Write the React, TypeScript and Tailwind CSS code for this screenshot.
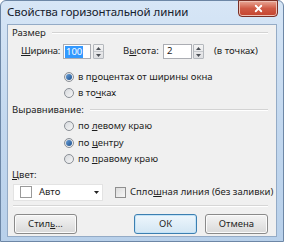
import { X } from 'lucide-react';

const Radio = ({ checked }: { checked?: boolean }) => (
  <span className="flex items-center justify-center w-[10px] h-[10px] rounded-full border border-[#8a8f96] bg-gradient-to-br from-[#d6d9dd] to-[#f6f6f6] shrink-0">
    {checked && (
      <span className="block w-[6px] h-[6px] rounded-full bg-gradient-to-br from-[#6aa0d8] to-[#1b4f8c]" />
    )}
  </span>
);

const Spinner = () => (
  <span className="flex flex-col w-[11px] h-[15px] border border-[#b4b8bd] bg-gradient-to-b from-[#f4f4f4] to-[#dedfe2] rounded-[1px]">
    <span className="flex-1 flex items-center justify-center border-b border-[#c6c9cd]">
      <svg width="5" height="3" viewBox="0 0 5 3">
        <path d="M0 3 L2.5 0 L5 3 Z" fill="#4d5157" />
      </svg>
    </span>
    <span className="flex-1 flex items-center justify-center">
      <svg width="5" height="3" viewBox="0 0 5 3">
        <path d="M0 0 L2.5 3 L5 0 Z" fill="#4d5157" />
      </svg>
    </span>
  </span>
);

const U = ({ children }: { children: string }) => <span className="underline underline-offset-1">{children}</span>;

const GroupHeader = ({ label }: { label: string }) => (
  <div className="flex items-center h-[16px] pl-[4px] pr-[8px] gap-[6px]">
    <span>{label}</span>
    <div className="flex-1 h-[2px] border-t border-[#d3d3d3] border-b border-b-white" />
  </div>
);

const RadioRow = ({ checked, children }: { checked?: boolean; children: React.ReactNode }) => (
  <div className="flex items-center h-[16px] pl-[56px] gap-[4px]">
    <Radio checked={checked} />
    <span>{children}</span>
  </div>
);

const Btn = ({ children, primary }: { children: React.ReactNode; primary?: boolean }) => (
  <button
    className={
      'w-[63px] h-[20px] rounded-[3px] border flex items-center justify-center text-[#1e1e1e] ' +
      (primary
        ? 'border-[#3c7fb1] bg-gradient-to-b from-[#eef6fc] to-[#d3e6f3] shadow-[inset_0_0_0_1px_#c3e3f7]'
        : 'border-[#8a8a8a] bg-gradient-to-b from-[#f4f4f4] to-[#d9d9d9] shadow-[inset_0_0_0_1px_#fbfbfb]')
    }
  >
    {children}
  </button>
);

const App = () => {
  return (
    <div className="w-[284px] h-[242px] overflow-hidden whitespace-nowrap font-['Noto_Sans','DejaVu_Sans',sans-serif] text-[9.5px] text-[#1e1e1e]">
      <div className="w-full h-full flex flex-col rounded-t-[6px] border border-[#6d87a6] bg-gradient-to-b from-[#d7e6f6] via-[#c3d8ef] to-[#b8d0ea]">
        <div className="flex items-start justify-between h-[23px] shrink-0">
          <span className="pl-[6px] pt-[5px] text-[11.5px] text-[#15202c] leading-none tracking-[-0.1px]">
            Свойства горизонтальной линии
          </span>
          <span className="mr-[5px] w-[40px] h-[17px] -mt-px flex items-center justify-center rounded-b-[4px] border border-[#7a2f25] bg-gradient-to-b from-[#e8a796] via-[#cf5a45] to-[#c4432d] shadow-[inset_0_0_0_1px_#eec0b4]">
            <X size={11} strokeWidth={4} color="#ffffff" />
          </span>
        </div>
        <div className="flex-1 mx-[6px] mb-[4px] border border-[#94abc6] bg-[#f0f0f0] flex flex-col">
          <GroupHeader label="Размер" />
          <div className="flex items-center h-[17px] mt-[2px] pl-[13px]">
            <span className="w-[42px] tracking-[-0.3px]">
              <U>Ш</U>ирина:
            </span>
            <span className="w-[28px] h-[15px] border border-[#abadb3] bg-white flex items-center pl-[1px]">
              <span className="bg-[#3399ff] text-white px-[1px] leading-[12px]">100</span>
            </span>
            <span className="ml-[2px]">
              <Spinner />
            </span>
            <span className="w-[40px] ml-[19px]">
              В<U>ы</U>сота:
            </span>
            <span className="w-[29px] h-[15px] border border-[#abadb3] bg-white flex items-center pl-[3px]">2</span>
            <span className="ml-[1px]">
              <Spinner />
            </span>
            <span className="ml-[10px]">(в точках)</span>
          </div>
          <div className="mt-[9px]" />
          <RadioRow checked>
            в п<U>р</U>оцентах от ширины окна
          </RadioRow>
          <RadioRow>
            в то<U>ч</U>ках
          </RadioRow>
          <div className="mt-[1px]" />
          <GroupHeader label="Выравнивание:" />
          <RadioRow>
            по <U>л</U>евому краю
          </RadioRow>
          <div className="mt-[1px]" />
          <RadioRow checked>
            по <U>ц</U>ентру
          </RadioRow>
          <RadioRow>
            по <U>п</U>равому краю
          </RadioRow>
          <div className="flex items-center h-[14px] pl-[4px] mt-[1px]">
            <span>
              <U>Ц</U>вет:
            </span>
          </div>
          <div className="flex items-center h-[18px] mt-[1px] pl-[5px]">
            <div className="w-[90px] h-[17px] bg-white border border-[#e3e3e3] flex items-center pl-[6px] pr-[3px]">
              <span className="w-[12px] h-[12px] border border-[#9a9a9a] bg-white" />
              <span className="ml-[7px] flex-1">Авто</span>
              <svg width="5" height="3" viewBox="0 0 5 3">
                <path d="M0 0 L2.5 3 L5 0 Z" fill="#222" />
              </svg>
            </div>
            <span className="ml-[12px] w-[11px] h-[11px] border border-[#8f8f8f] bg-gradient-to-br from-[#dcdcdc] to-[#f7f7f7]" />
            <span className="ml-[4px]">
              Сплo<U>ш</U>ная линия (без заливки)
            </span>
          </div>
          <div className="ml-[5px] mr-[8px] mt-[4px] h-[2px] border-t border-[#d6d6d6] border-b border-b-white" />
          <div className="flex items-center mt-[7px] pl-[6px] pr-[8px]">
            <Btn>
              Стил<U>ь</U>...
            </Btn>
            <div className="flex-1" />
            <Btn primary>ОК</Btn>
            <div className="w-[8px]" />
            <Btn>Отмена</Btn>
          </div>
        </div>
      </div>
    </div>
  );
};

export default App;
